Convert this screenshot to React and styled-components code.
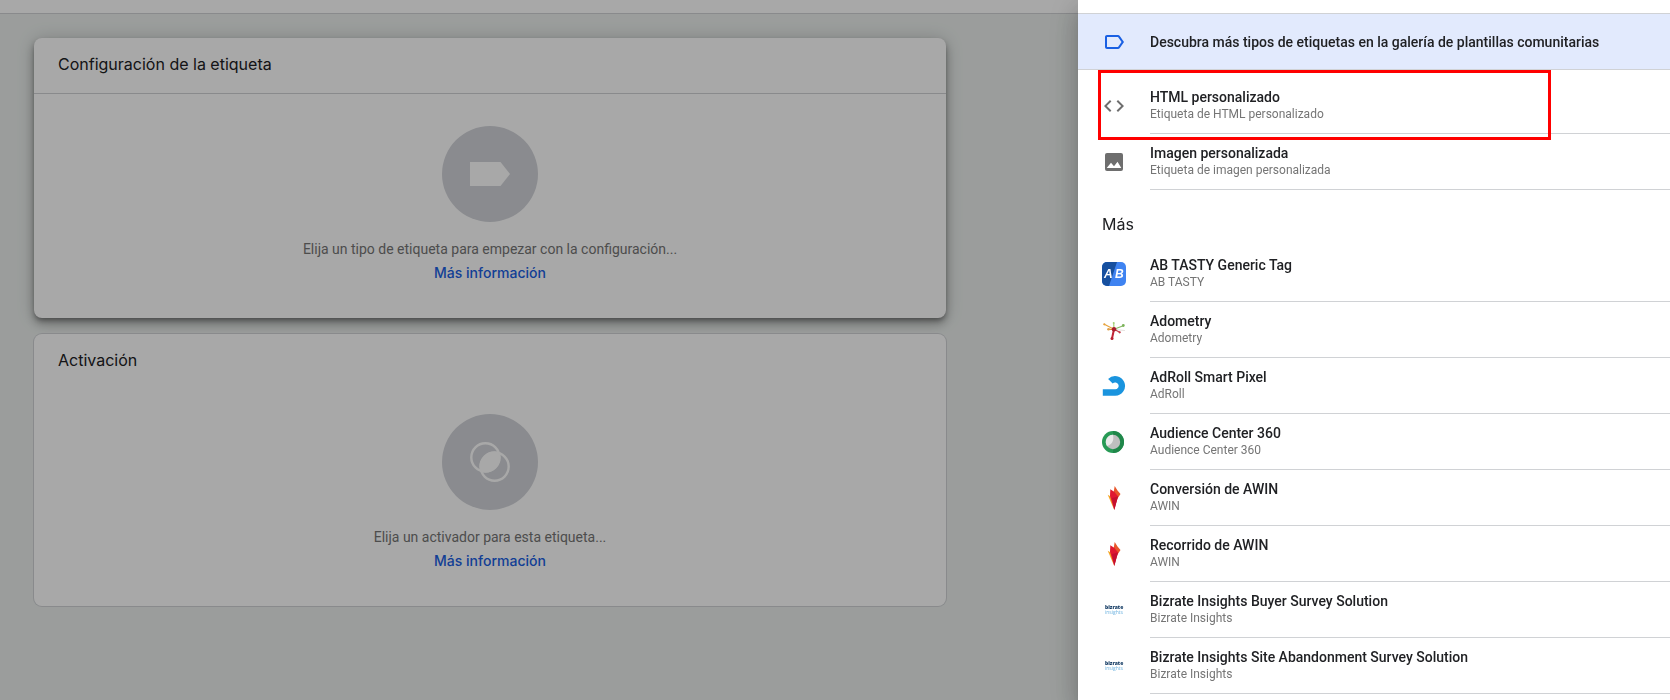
import React from 'react';
import styled, { createGlobalStyle } from 'styled-components';

const GlobalStyle = createGlobalStyle`
  *, *::before, *::after { box-sizing: border-box; }
  html, body, #root { height: 100%; }
  body {
    margin: 0;
    overflow: hidden;
    background: #ebefed;
    color: #202124;
    font-family: Roboto, "Liberation Sans", sans-serif;
    font-size: 14px;
  }
  h2, p, ul { margin: 0; padding: 0; font-weight: 400; }
  button { font: inherit; color: inherit; }
`;

const headingFont = 'Inter, Roboto, sans-serif';
const lineColor = '#d0d2d5';

const TopBar = styled.header`
  height: 14px;
  background: #fff;
  border-bottom: 1px solid ${lineColor};
`;

const Workspace = styled.main`
  display: grid;
  grid-template-columns: 34px minmax(0, 912fr) minmax(0, 724fr);
  padding-top: 24px;
`;

const Cards = styled.div`
  grid-column: 2;
  display: flex;
  flex-direction: column;
  gap: 16px;
`;

const Card = styled.section`
  background: #fff;
  border-radius: 8px;
  box-shadow: ${(p) =>
    p.$raised
      ? '0 3px 5px -1px rgba(0,0,0,.32), 0 6px 10px 0 rgba(0,0,0,.24), 0 1px 18px 0 rgba(0,0,0,.18)'
      : `0 0 0 1px ${lineColor}`};
`;

const CardHeader = styled.div`
  height: 56px;
  padding: 14px 24px;
  border-bottom: 1px solid ${(p) => (p.$ruled ? lineColor : 'transparent')};
`;

const CardTitle = styled.h2`
  font-family: ${headingFont};
  font-size: 16px;
  line-height: 24px;
`;

const CardBody = styled.div`
  display: flex;
  flex-direction: column;
  align-items: center;
  padding: ${(p) => p.$top}px 24px 34px;
`;

const Badge = styled.div`
  width: 96px;
  height: 96px;
  margin-bottom: 16px;
  border-radius: 50%;
  background: #d2d4d9;
  display: grid;
  place-items: center;
`;

const Hint = styled.p`
  color: #757575;
  font-size: 14px;
  line-height: 22px;
`;

const MoreLink = styled.a`
  margin-top: 2px;
  color: #1a60e3;
  font-family: ${headingFont};
  font-size: 14px;
  font-weight: 500;
  line-height: 22px;
  text-decoration: none;
`;

const Overlay = styled.div`
  position: fixed;
  inset: 0;
  display: grid;
  grid-template-columns: minmax(0, 1078fr) minmax(0, 592fr);
  background: rgba(0, 0, 0, 0.34);
`;

const Drawer = styled.aside`
  grid-column: 2;
  overflow: hidden;
  background: #fff;
  box-shadow: 0 8px 10px -5px rgba(0, 0, 0, 0.2), 0 16px 24px 2px rgba(0, 0, 0, 0.14),
    0 6px 30px 5px rgba(0, 0, 0, 0.12);
`;

const GalleryButton = styled.button`
  display: flex;
  align-items: center;
  gap: 24px;
  width: 100%;
  height: 56px;
  padding: 0 24px;
  border: 0;
  border-bottom: 1px solid ${lineColor};
  background: #e2eafd;
  font-weight: 500;
  text-align: left;
  cursor: pointer;
`;

const TagList = styled.ul`
  list-style: none;
  padding-top: ${(p) => p.$top || 0}px;
`;

const TagItem = styled.li`
  position: relative;
`;

const TagButton = styled.button`
  display: flex;
  gap: 24px;
  width: 100%;
  height: 56px;
  padding: 0 0 0 24px;
  border: 0;
  background: none;
  text-align: left;
  cursor: pointer;
`;

const IconSlot = styled.span`
  flex: none;
  width: 24px;
  height: 24px;
  margin-top: 16px;
  svg { display: block; }
`;

const TagText = styled.span`
  flex: 1;
  display: flex;
  flex-direction: column;
  padding-top: 10px;
  border-bottom: 1px solid ${lineColor};
`;

const TagName = styled.span`
  font-size: 14px;
  font-weight: 500;
  line-height: 18px;
`;

const TagVendor = styled.span`
  color: #757575;
  font-size: 12px;
  line-height: 16px;
`;

const GroupTitle = styled.h2`
  padding: 22px 24px 10px;
  font-family: ${headingFont};
  font-size: 16px;
  line-height: 24px;
`;

const Highlight = styled.span`
  position: absolute;
  inset: -8px 119px -6px 20px;
  border: 3px solid #f00;
  pointer-events: none;
`;

const Svg = (props) => <svg width="24" height="24" viewBox="0 0 24 24" aria-hidden="true" {...props} />;

const LabelIcon = () => (
  <Svg fill="#1a60e3">
    <path d="M17.63 5.84C17.27 5.33 16.67 5 16 5L5 5.01C3.9 5.01 3 5.9 3 7v10c0 1.1.9 1.99 2 1.99L16 19c.67 0 1.27-.33 1.63-.84L22 12l-4.37-6.16zM16 17H5V7h11l3.55 5L16 17z" />
  </Svg>
);

const CodeIcon = () => (
  <Svg fill="#6e6e6e">
    <path d="M9.4 16.6L4.8 12l4.6-4.6L8 6l-6 6 6 6 1.4-1.4zm5.2 0l4.6-4.6-4.6-4.6L16 6l6 6-6 6-1.4-1.4z" />
  </Svg>
);

const ImageIcon = () => (
  <Svg fill="#6e6e6e">
    <rect x="3" y="3" width="18" height="18" rx="2" />
    <path d="M4.700 18L9 12.800L12 16.200L15.500 11.800L19.300 18z" fill="#fff" />
  </Svg>
);

const AbTastyIcon = () => (
  <Svg>
    <rect width="24" height="24" rx="5" fill="#3f83f1" />
    <path d="M5 0H15L7 24H5a5 5 0 0 1-5-5V5a5 5 0 0 1 5-5z" fill="#17509f" />
    <g fill="#fff" fontFamily="Liberation Sans" fontWeight="700" fontStyle="italic" fontSize="12">
      <text x="2" y="16">A</text>
      <text x="13" y="16">B</text>
    </g>
  </Svg>
);

const AdometryIcon = () => (
  <Svg strokeWidth="1.2" strokeLinecap="round">
    <path d="M12 11.3L22.5 12.5" stroke="#e6e3e0" />
    <path d="M12 11.3L2.3 6.3" stroke="#e6a23c" />
    <path d="M12 11.3L11.7 5" stroke="#a5cf7a" />
    <path d="M12 11.3L21.3 7.7" stroke="#86b866" />
    <path d="M12 11.3H6.5" stroke="#e0913a" />
    <path d="M12 11.3L17.7 14.3" stroke="#c43a48" />
    <path d="M12 11.3L10 20.5" stroke="#c22538" strokeWidth="2" />
    <circle cx="2.3" cy="6.3" r="1.1" fill="#e6a23c" />
    <circle cx="11.7" cy="5" r="1" fill="#a5cf7a" />
    <circle cx="21.3" cy="7.5" r="1.4" fill="#7cb35a" />
    <circle cx="6.5" cy="11.3" r="1.3" fill="#e0a04a" />
    <circle cx="17.7" cy="14.3" r="1.1" fill="#c43a48" />
    <circle cx="10" cy="20.6" r="1.5" fill="#b81f30" />
    <circle cx="12" cy="11.3" r="2.2" fill="#a81a2c" />
  </Svg>
);

const AdRollIcon = () => (
  <Svg fill="none" stroke="#1a94de" strokeWidth="6.4">
    <path d="M.8 18.5H13.2A6.65 6.65 0 1 0 8.4 7.2" />
  </Svg>
);

const AudienceCenterIcon = () => (
  <Svg>
    <circle cx="11" cy="12" r="11" fill="#279a55" />
    <path d="M11 1a11 11 0 0 1 0 22z" fill="#20874a" />
    <circle cx="11" cy="12" r="7.2" fill="#bfbfbf" />
    <path d="M11 4.8a7.2 7.2 0 0 0-6 11.2C9 15.5 12.5 11 11 4.8z" fill="#e9e9e9" />
  </Svg>
);

const AwinIcon = () => (
  <Svg>
    <path d="M12.7 0L15.5 4.5L18.5 8L14.5 14L11.5 7z" fill="#e8562a" />
    <path d="M5.7 8.7L9.5 11L12.3 24z" fill="#f5a623" />
    <path d="M8.3 3.3L12.5 6L16 10.5L12.3 24L8 10z" fill="#e0182f" />
    <path d="M10 12L16 10.5L12.3 24z" fill="#c4102f" />
  </Svg>
);

const BizrateIcon = () => (
  <Svg fontFamily="Open Sans" fontSize="5">
    <text x="3" y="11" fill="#123a63" fontWeight="800">bizrate</text>
    <text x="3" y="16" fill="#6fb3e0">insights</text>
  </Svg>
);

const TagGlyph = () => (
  <svg width="40" height="24" viewBox="0 0 40 24" aria-hidden="true">
    <path d="M0 0H30.5L40 12L30.5 24H0z" fill="#fff" />
  </svg>
);

const TriggerGlyph = () => (
  <svg width="40" height="40" viewBox="0 0 40 40" aria-hidden="true">
    <g fill="none" stroke="#fff" strokeWidth="2.4">
      <circle cx="15.4" cy="15.4" r="14.1" />
      <circle cx="24.6" cy="24.6" r="14.1" />
    </g>
    <path d="M29.6 10.4A15.2 15.2 0 0 1 10.4 29.6A15.2 15.2 0 0 1 29.6 10.4z" fill="#fff" />
  </svg>
);

const customTags = [
  { name: 'HTML personalizado', vendor: 'Etiqueta de HTML personalizado', Icon: CodeIcon, highlighted: true },
  { name: 'Imagen personalizada', vendor: 'Etiqueta de imagen personalizada', Icon: ImageIcon },
];

const moreTags = [
  { name: 'AB TASTY Generic Tag', vendor: 'AB TASTY', Icon: AbTastyIcon },
  { name: 'Adometry', vendor: 'Adometry', Icon: AdometryIcon },
  { name: 'AdRoll Smart Pixel', vendor: 'AdRoll', Icon: AdRollIcon },
  { name: 'Audience Center 360', vendor: 'Audience Center 360', Icon: AudienceCenterIcon },
  { name: 'Conversión de AWIN', vendor: 'AWIN', Icon: AwinIcon },
  { name: 'Recorrido de AWIN', vendor: 'AWIN', Icon: AwinIcon },
  { name: 'Bizrate Insights Buyer Survey Solution', vendor: 'Bizrate Insights', Icon: BizrateIcon },
  { name: 'Bizrate Insights Site Abandonment Survey Solution', vendor: 'Bizrate Insights', Icon: BizrateIcon },
];

function TagRows({ tags, top }) {
  return (
    <TagList $top={top}>
      {tags.map(({ name, vendor, Icon, highlighted }) => (
        <TagItem key={name}>
          <TagButton type="button">
            <IconSlot><Icon /></IconSlot>
            <TagText>
              <TagName>{name}</TagName>
              <TagVendor>{vendor}</TagVendor>
            </TagText>
          </TagButton>
          {highlighted && <Highlight />}
        </TagItem>
      ))}
    </TagList>
  );
}

export default function App() {
  return (
    <>
      <GlobalStyle />
      <TopBar />
      <Workspace>
        <Cards>
          <Card $raised>
            <CardHeader $ruled><CardTitle>Configuración de la etiqueta</CardTitle></CardHeader>
            <CardBody $top={32}>
              <Badge><TagGlyph /></Badge>
              <Hint>Elija un tipo de etiqueta para empezar con la configuración...</Hint>
              <MoreLink href="#etiqueta">Más información</MoreLink>
            </CardBody>
          </Card>
          <Card>
            <CardHeader><CardTitle>Activación</CardTitle></CardHeader>
            <CardBody $top={24}>
              <Badge><TriggerGlyph /></Badge>
              <Hint>Elija un activador para esta etiqueta...</Hint>
              <MoreLink href="#activador">Más información</MoreLink>
            </CardBody>
          </Card>
        </Cards>
      </Workspace>
      <Overlay>
        <Drawer>
          <TopBar as="div" />
          <GalleryButton type="button">
            <LabelIcon />
            Descubra más tipos de etiquetas en la galería de plantillas comunitarias
          </GalleryButton>
          <TagRows tags={customTags} top={8} />
          <GroupTitle>Más</GroupTitle>
          <TagRows tags={moreTags} />
        </Drawer>
      </Overlay>
    </>
  );
}
